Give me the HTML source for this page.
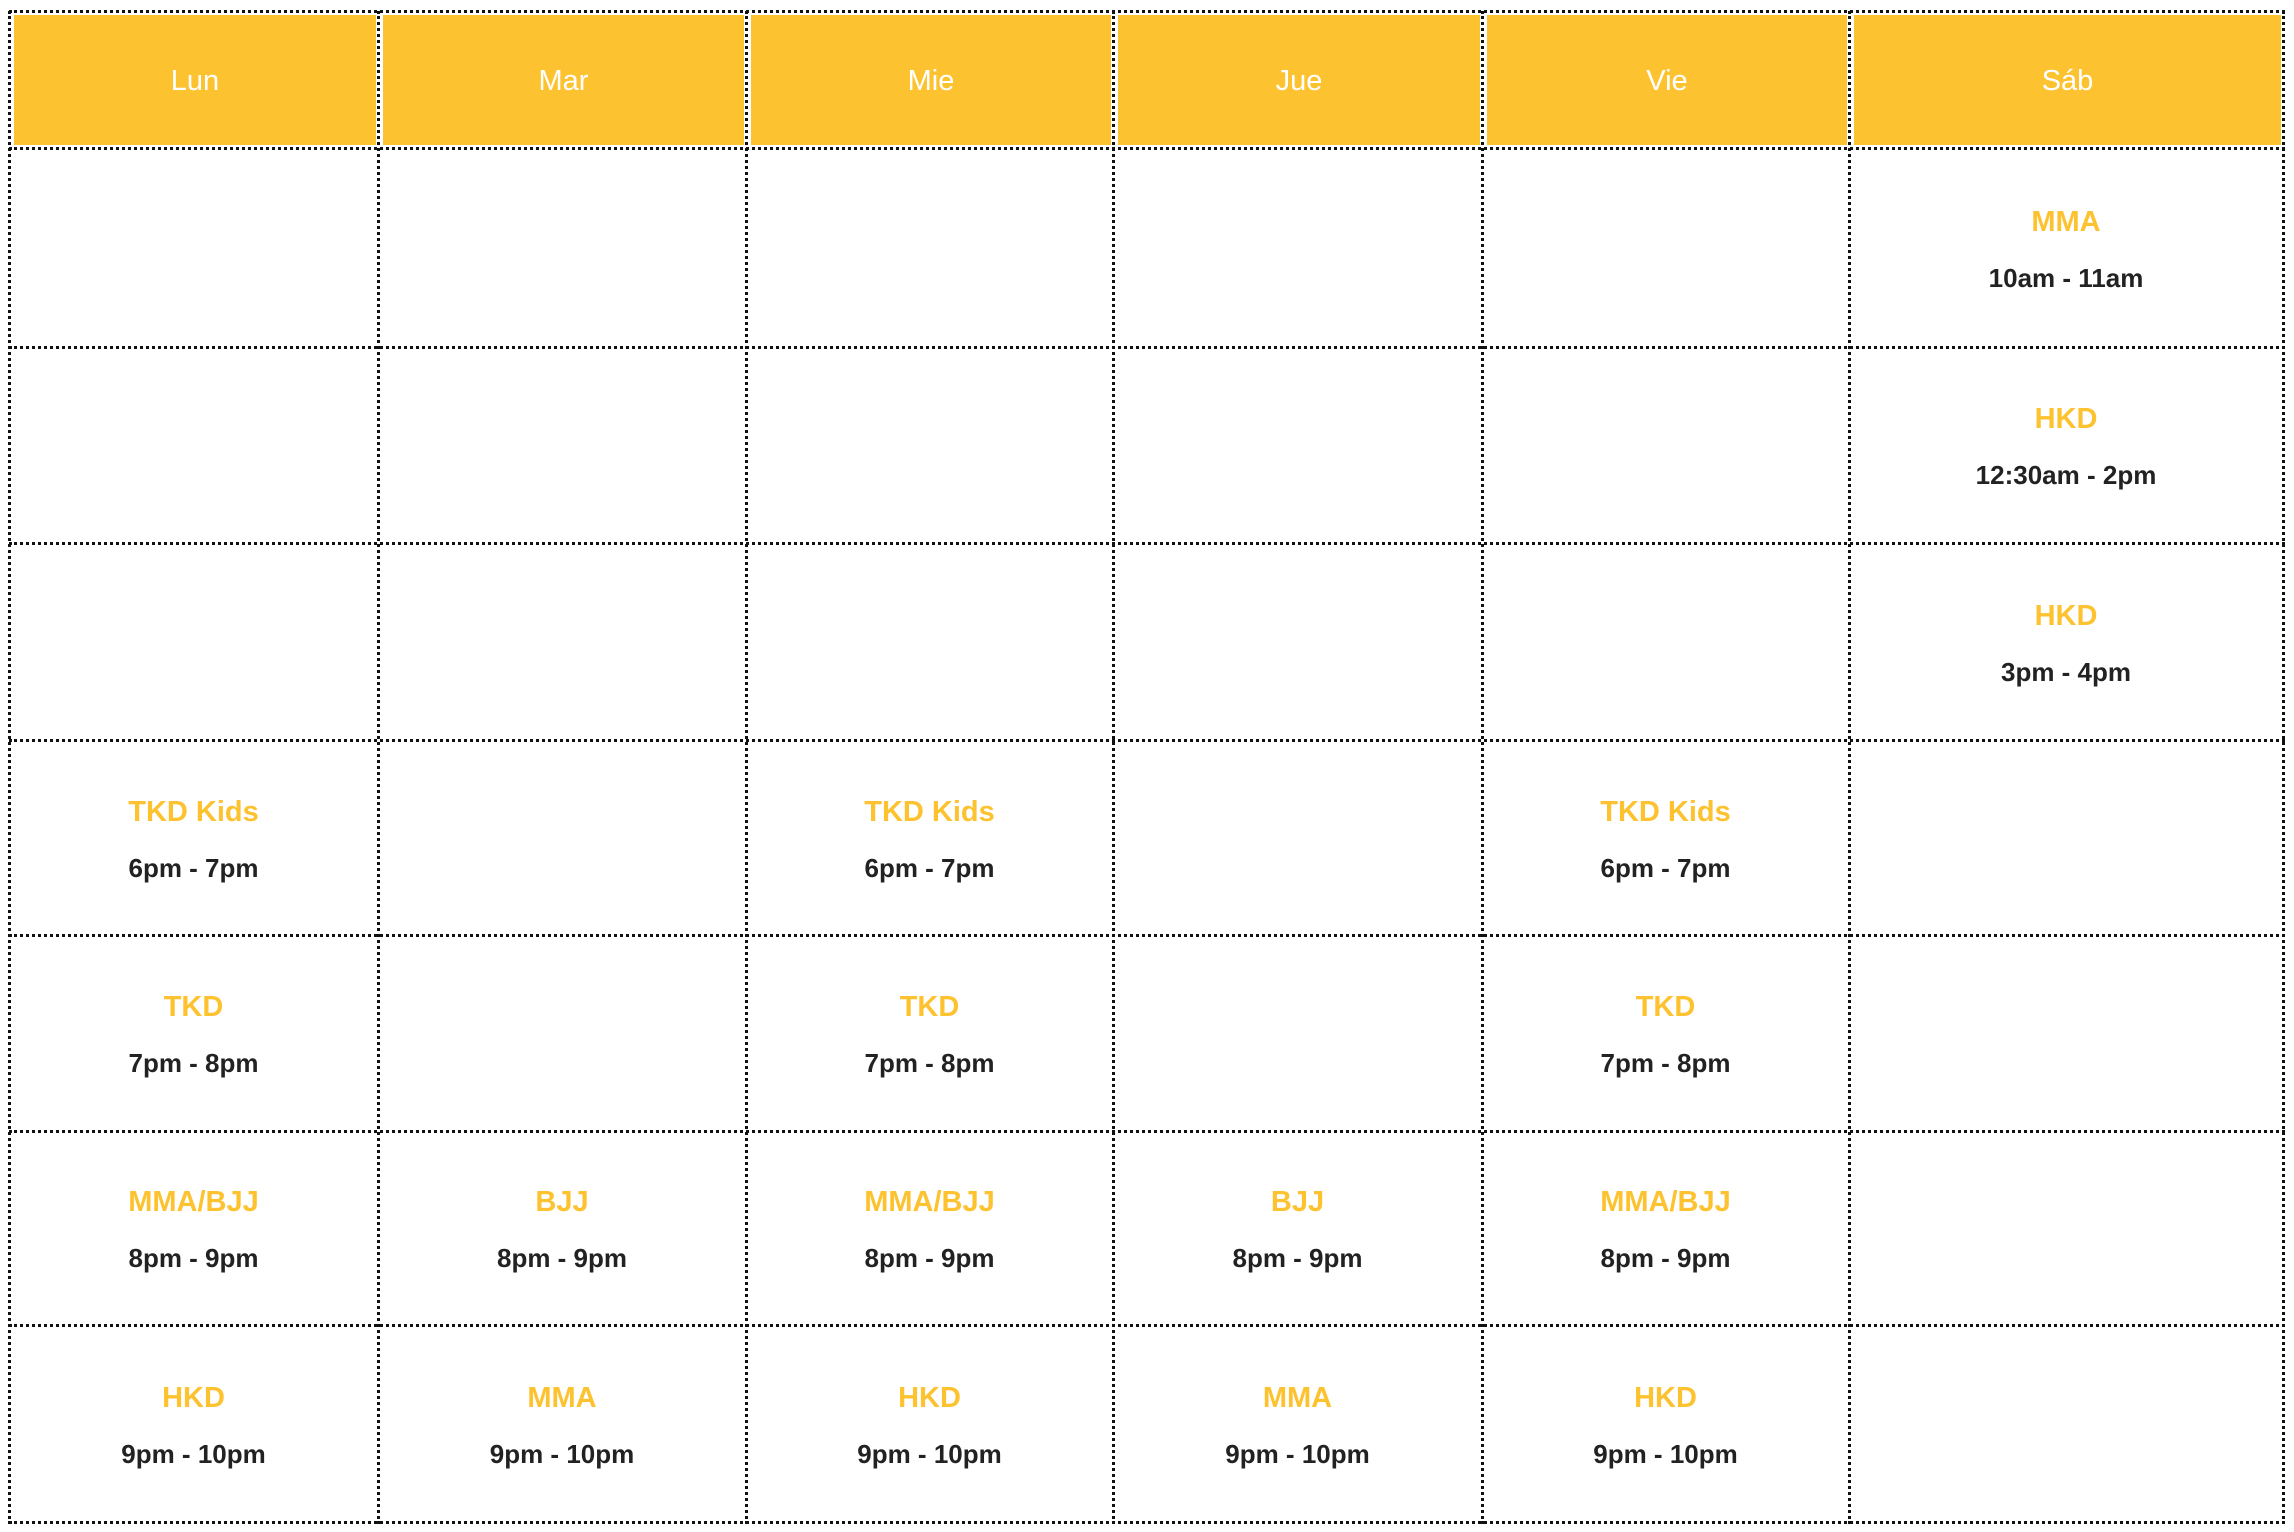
<!DOCTYPE html>
<html><head><meta charset="utf-8"><style>
body{margin:0;width:2294px;height:1532px;background:#fff;font-family:"Liberation Sans",sans-serif;position:relative;overflow:hidden}
.h{position:absolute;background:#FDC22F;color:#fff;font-size:29px;display:flex;align-items:center;justify-content:center;padding-top:2px;box-sizing:border-box}
.v{position:absolute;width:0;border-left:3px dotted #111}
.hl{position:absolute;height:0;border-top:3px dotted #111}
.c{position:absolute;text-align:center}
.t{color:#FDC22F;font-weight:bold;font-size:29px;position:absolute;left:0;right:0;line-height:40px}
.m{color:#222;font-weight:bold;font-size:26px;position:absolute;left:0;right:0;line-height:40px}
</style></head><body>
<div id="g"></div>
<script>
var xs=[9,378,746,1113,1482,1849,2283],ys=[11,148,347,543,740,935,1131,1325,1522];
var days=["Lun","Mar","Mie","Jue","Vie","Sáb"];
var h="";
for(var i=0;i<6;i++){h+='<div class="h" style="left:'+(xs[i]+5)+'px;top:'+(ys[0]+4)+'px;width:'+(xs[i+1]-xs[i]-7)+'px;height:'+(ys[1]-ys[0]-7)+'px">'+days[i]+'</div>';}
for(var i=0;i<xs.length;i++)h+='<div class="v" style="left:'+(xs[i]-1)+'px;top:'+ys[0]+'px;height:'+(ys[8]-ys[0]+2)+'px"></div>';
for(var j=0;j<ys.length;j++)h+='<div class="hl" style="top:'+(ys[j]-1)+'px;left:'+xs[0]+'px;width:'+(xs[6]-xs[0]+2)+'px"></div>';
var d=[[0,5,"MMA","10am - 11am"],[1,5,"HKD","12:30am - 2pm"],[2,5,"HKD","3pm - 4pm"]];
[0,2,4].forEach(function(c){d.push([3,c,"TKD Kids","6pm - 7pm"]);d.push([4,c,"TKD","7pm - 8pm"]);d.push([5,c,"MMA/BJJ","8pm - 9pm"]);d.push([6,c,"HKD","9pm - 10pm"]);});
[1,3].forEach(function(c){d.push([5,c,"BJJ","8pm - 9pm"]);d.push([6,c,"MMA","9pm - 10pm"]);});
d.forEach(function(e){var r=e[0]+1,c=e[1];var mid=(ys[r]+ys[r+1])/2;
h+='<div class="c" style="left:'+xs[c]+'px;width:'+(xs[c+1]-xs[c])+'px;top:0;height:0"><div class="t" style="top:'+(mid-46)+'px">'+e[2]+'</div><div class="m" style="top:'+(mid+10)+'px">'+e[3]+'</div></div>';});
document.getElementById("g").innerHTML=h;
</script>
</body></html>
